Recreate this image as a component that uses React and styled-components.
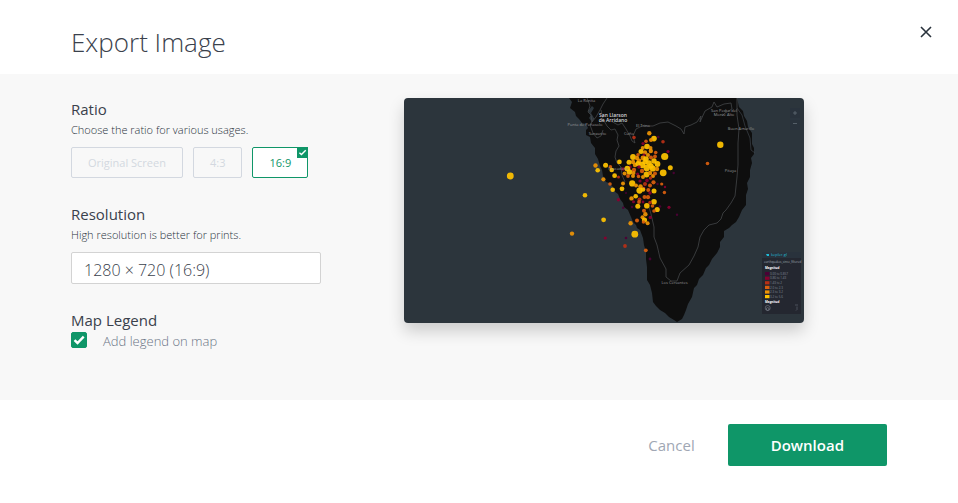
import React from "react";
import styled, { createGlobalStyle } from "styled-components";

const palette = {
  green: '#0f9668',
  title: '#3a414c',
  muted: '#6a7485',
  disabled: '#d3d8e0',
  panel: '#f8f8f8',
  water: '#2c353c',
  land: '#0e0e0e'
};

const GlobalStyle = createGlobalStyle`
  * {
    box-sizing: border-box;
  }

  body {
    margin: 0;
    background: #fff;
    color: ${palette.title};
    font-family: "Open Sans", "Noto Sans", sans-serif;
  }

  button, select, input {
    font-family: inherit;
    margin: 0;
  }
`;

const Dialog = styled.div`
  position: relative;
`;

const Header = styled.header`
  padding: 24px 71px 13px;
`;

const Title = styled.h1`
  margin: 0;
  font-size: 26px;
  font-weight: 300;
  line-height: 37px;
`;

const CloseButton = styled.button`
  position: absolute;
  top: 22px;
  right: 22px;
  width: 20px;
  height: 20px;
  padding: 0;
  border: 0;
  background: transparent;
  cursor: pointer;
`;

const Content = styled.main`
  display: flex;
  align-items: flex-start;
  gap: 83px;
  padding: 24px 71px 50px;
  background: ${palette.panel};
`;

const Settings = styled.div`
  display: flex;
  flex-direction: column;
  gap: 25px;
  flex: 0 0 250px;
`;

const SectionTitle = styled.h2`
  display: block;
  margin: 0 0 1px;
  font-size: 15px;
  font-weight: 400;
  line-height: 22px;
`;

const Hint = styled.p`
  margin: 0 0 9px;
  font-size: 11px;
  font-weight: 300;
  line-height: 17px;
  color: #29323c;
`;

const RatioOptions = styled.div`
  display: flex;
  gap: 10px;
`;

const RatioButton = styled.button`
  position: relative;
  height: 31px;
  padding: 0 16px;
  border: 1px solid ${({ $active }) => ($active ? palette.green : palette.disabled)};
  border-radius: 2px;
  background: ${({ $active }) => ($active ? '#fff' : 'transparent')};
  color: ${({ $active }) => ($active ? palette.green : palette.disabled)};
  font-size: 11px;
  font-weight: 500;
  white-space: nowrap;
  cursor: pointer;
`;

const Corner = styled.span`
  position: absolute;
  top: -1px;
  right: -1px;
  display: flex;
  width: 11px;
  height: 11px;
  background: ${palette.green};
`;

const ResolutionSelect = styled.select`
  display: block;
  width: 100%;
  height: 32px;
  padding: 4px 12px 0;
  appearance: none;
  border: 1px solid #d3d3d3;
  border-radius: 2px;
  background: #fff;
  color: ${palette.title};
  font-size: 16px;
  font-weight: 300;
`;

const CheckboxLabel = styled.label`
  display: flex;
  gap: 16px;
  color: ${palette.muted};
  font-size: 13px;
  font-weight: 300;
  line-height: 18px;
  cursor: pointer;
`;

const CheckboxBox = styled.span`
  display: grid;
  width: 16px;
  height: 16px;

  > * {
    grid-area: 1 / 1;
  }

  svg {
    pointer-events: none;
  }
`;

const Checkbox = styled.input`
  width: 16px;
  height: 16px;
  appearance: none;
  border: 1px solid ${palette.green};
  border-radius: 2px;

  &:checked {
    background: ${palette.green};
  }
`;

const Preview = styled.figure`
  flex: 0 1 400px;
  margin: 0;
  border-radius: 4px;
  overflow: hidden;
  box-shadow: 0 8px 16px rgba(0, 0, 0, 0.18);

  svg {
    display: block;
    width: 100%;
    height: auto;
  }
`;

const Footer = styled.footer`
  display: flex;
  justify-content: flex-end;
  padding: 24px 71px 37px;
`;

const FooterButton = styled.button`
  height: 42px;
  padding: 0 ${({ $primary }) => ($primary ? '43px' : '33px')};
  border: 0;
  border-radius: 2px;
  background: ${({ $primary }) => ($primary ? palette.green : 'transparent')};
  color: ${({ $primary }) => ($primary ? '#fff' : '#a0a7b4')};
  font-size: 15px;
  font-weight: ${({ $primary }) => ($primary ? 600 : 400)};
  cursor: pointer;
`;

const COLORS = ['#4c0035', '#880030', '#b72f15', '#d95f0e', '#ee9304', '#ffc300'];

// x, y, radius, color index
const QUAKES = [
  [106.3, 78, 3.4, 5], [181, 97.3, 2.3, 5], [168, 135.6, 2.2, 4], [199.6, 121.8, 2.4, 5],
  [201.3, 140, 1.6, 1], [222, 140, 1.3, 0], [221, 148, 1.9, 2], [230.8, 136.2, 3.4, 5],
  [241.8, 152.3, 1.9, 3], [246, 161, 1.4, 0], [226.6, 125.2, 2.2, 4], [233, 122.6, 2, 3],
  [316.3, 46.8, 3.2, 5], [303.5, 65.5, 1.8, 3], [273, 116.8, 1.2, 0], [265, 109.3, 1.6, 1],
  [269.7, 75, 1.2, 0], [230, 39.5, 1.8, 2], [259, 43.7, 1.8, 2], [264, 53.5, 1.6, 1],
  [254.3, 39, 1.3, 0], [191.5, 67.5, 2.2, 4], [193.7, 72.3, 2.3, 5], [201.6, 67.3, 2.5, 5],
  [206.4, 68.8, 1.8, 3], [207.7, 72, 2.3, 5], [215.4, 63.9, 2.4, 5], [210.6, 77.7, 2.4, 5],
  [214.5, 79, 1.5, 2], [199.4, 81.3, 2.1, 4], [206, 86, 1.8, 3], [208.7, 91.7, 2.3, 5],
  [218, 90.8, 2.4, 5], [219, 85.6, 2, 4], [214.4, 101.8, 1.7, 1], [219.3, 109.8, 1.3, 0],
  [222, 95, 1, 0], [219, 71, 1.7, 1], [228, 109, 1.2, 0],
  [257.7, 86, 1.6, 3], [260.4, 94.5, 1.7, 3], [261, 89, 1.2, 1], [266.3, 69.7, 2.5, 5],
  [260.7, 58.5, 3.6, 5], [259.2, 74.8, 3.4, 5], [245.3, 35.2, 2.2, 4], [250, 40.6, 2.8, 5],
  [247, 42, 2, 4], [242, 43.3, 1.8, 3], [239, 45.5, 1.6, 1], [238.7, 50, 2, 4],
  [243, 48.5, 2.8, 5], [246.5, 50, 2, 4], [237, 53.6, 2.5, 5], [241, 54.4, 2.2, 4],
  [246.8, 53, 2.2, 4], [251.7, 54.5, 1.8, 3], [234, 56.7, 1.8, 3], [229, 59, 2.9, 5],
  [233, 60, 2.2, 4], [225, 64.2, 2.5, 5], [235, 63, 2.4, 4], [240, 57, 1.4, 1],
  [251, 58.5, 1.9, 3], [244, 57, 2, 4], [239, 60, 2.4, 4], [229, 64, 2.2, 4],
  [242, 61, 2.8, 5], [247, 59.5, 2, 3], [245, 65, 2.8, 5], [250, 63, 2.7, 5],
  [253.5, 66, 2.9, 5], [238, 67, 3.2, 5], [231, 67, 2.2, 4], [226, 69, 1.7, 1],
  [234, 65.5, 2.6, 5], [247, 68, 2.7, 5], [241, 64, 2.6, 5],
  [223.3, 70.6, 2.9, 5], [225.5, 74, 2.8, 5], [220.6, 75.5, 2, 4], [230, 72, 2.2, 3],
  [235, 69, 1.8, 1], [242.7, 70, 3.2, 5], [248.7, 70.5, 3.1, 5], [253, 71, 2.2, 4],
  [238, 73, 2.2, 3], [233.6, 76, 1.6, 1], [229, 78, 2, 4], [234.5, 78.5, 1.8, 3],
  [229.5, 75, 2, 4], [224, 78, 1.9, 3], [249, 78, 2, 4],
  [242.5, 76.5, 2.9, 5], [246, 75, 2.2, 4], [251, 75.5, 2, 3], [239, 79, 2, 4],
  [246.5, 80, 1.7, 2], [243, 82.5, 1.8, 1], [236, 83, 1.6, 1], [249.5, 84.3, 2.1, 3],
  [228.2, 85.4, 3.1, 5], [232, 87.5, 2, 4], [241, 86, 2, 2], [246, 87.5, 2, 3],
  [236.5, 88.5, 2.3, 4], [253.5, 86, 1.2, 0], [240, 90, 1.5, 1], [235.5, 92.6, 3.1, 5],
  [239, 91.5, 2.3, 5], [244.3, 92, 2, 3], [250, 93, 2.5, 5], [246, 95, 1.7, 1],
  [231.7, 98.3, 2.3, 5], [227.5, 100.4, 2.2, 4], [235.5, 101.5, 2, 2], [229.5, 103.7, 1.5, 1],
  [240.5, 99, 2, 3], [244, 99.2, 2.1, 3], [235, 104, 1.9, 3], [239, 104, 1.4, 1],
  [250, 103.7, 2.8, 5], [246, 104.5, 1.8, 2], [233.8, 108.2, 2.5, 5], [242.8, 107.8, 2.8, 5],
  [248.5, 108, 1.8, 3], [256, 108.5, 1.3, 0], [253.2, 111.5, 2.6, 5], [250, 113, 1.8, 3],
  [240, 112.7, 2, 3], [241.4, 116.3, 2.2, 4], [246.3, 119.4, 1.6, 1], [238.5, 119.2, 2, 4],
  [240.5, 122, 2.6, 5], [243.6, 125.3, 2, 4], [239.5, 124, 1.8, 3]
];

const PLACES = [
  [182.5, 4, 'La Ronita'], [181, 28, 'Punta de Peñasolo'], [193.5, 37, 'Sanzarito'],
  [225, 37, 'Cuño'], [239, 28.5, 'El Trino'], [214, 72, 'Pescadero'],
  [320, 14, 'San Pedro del'], [320, 17.5, 'Monte Alto'], [337, 32, 'Buen Amarillo'],
  [326.5, 74, 'Pitaya'], [270.5, 186, 'Los Cervantes']
];

const LEGEND = ['0.00 to 0.857', '0.86 to 1.43', '1.43 to 2', '2.0 to 2.3', '2.3 to 3.2', '3.2 to 5.6'];

const LAND_PATH = `M165 0 L168 4 L166 10 L171 14 L172 18 L175 21 L178 25 L182 26 L184 30 L182 32 L182 37
  L186 39 L187 45 L191 50 L191 56 L194 61 L196 68 L198 72 L199 78 L202 84 L205 85 L209 89 L210 93
  L214 96 L216 101 L219 105 L220 109 L224 112 L227 119 L229 124 L232 127 L233 130 L236 132 L239 140
  L240 147 L242 154 L242 161 L243 169 L243 182 L246 187 L248 195 L249 204 L252 208 L256 212 L261 215
  L265 219 L270 222 L273 224 L278 221 L280 217 L282 212 L284 206 L288 199 L290 190 L293 187 L295 181
  L299 177 L302 170 L305 167 L308 161 L313 155 L316 149 L316 144 L320 139 L320 133 L325 130 L328 127
  L332 124 L335 119 L338 112 L342 107 L342 97 L344 91 L343 85 L346 79 L346 72 L348 65 L347 60 L350 56
  L350 50 L348 46 L348 35 L344 29 L343 23 L340 18 L339 13 L335 9 L333 0Z`;

const TickIcon = ({ size, width = 2 }) => (
  <svg width={size} height={size} viewBox="0 0 16 16" fill="none" stroke="#fff" strokeWidth={width} aria-hidden="true">
    <path d="M3.5 8.2 L6.5 11 L12.7 4.7" />
  </svg>
);

const MapPreview = ({ legend }) => (
  <svg viewBox="0 0 400 225" role="img" aria-label="Map preview" fontFamily="Open Sans, sans-serif">
    <rect width="400" height="225" fill={palette.water} />
    <path d={LAND_PATH} fill={palette.land} />
    <path d="M184 13 L187 17 L185 20 L188 24 L190 20 L187 15 L190 10 L188 8Z" fill={palette.water} />
    <g fill="none" stroke="#4a4d50" strokeWidth="0.7" strokeLinejoin="round">
      <path d="M183 0 L186 8 L184 14 L187 17 L188 24 L192 19 L196 12 L199 6 L203 0" />
      <path d="M190 20 L186 27 L189 35 L193 40 L197 38 L199 32" />
      <path d="M197 12 L199 21 L203 28 L207 32 L211 31 L214 37 L213 42 L215 48 L212 53 L211 59 L213 65 L217 69 L218 77 L221 84" />
      <path d="M207 23 L214 27 L218 25 L222 31 L226 38 L228 43 L231 45 L229 38 L232 31 L238 28 L249 28 L256 25 L264 24 L272 28 L277 31 L280 36 L281 29 L287 27 L293 24 L297 18 L296 24 L301 13 L308 9 L310 4 L313 9 L320 6 L327 5 L328 11 L321 15 L318 18" />
      <path d="M333 0 L333 17 L335 31 L334 45 L334 67 L333 79 L331 98 L327 105 L322 112 L319 115 L317 121 L313 125 L305 127 L300 132 L296 139 L294 149 L290 158 L285 167 L276 175 L273 183 L267 183 L262 179 L262 171 L256 160 L253 147 L250 139 L250 129 L247 116 L245 109" />
      <path d="M333 10 L338 17 L341 28 L346 40 L347 52 L351 55" stroke="#3c444a" />
    </g>
    {QUAKES.map(([x, y, r, c], i) => (
      <circle key={i} cx={x} cy={y} r={r} fill={COLORS[c]} opacity="0.93" />
    ))}
    <g fill="#96989a" fontSize="4" textAnchor="middle">
      {PLACES.map(([x, y, name]) => <text key={name} x={x} y={y}>{name}</text>)}
      <g fill="#d6d6dc" fontSize="5" fontWeight="600">
        <text x="209" y="19">San Llarson</text>
        <text x="209" y="24">de Arridano</text>
      </g>
    </g>
    <g>
      <rect x="386" y="10" width="10" height="22" rx="1" fill="#29323c" />
      <path d="M389 15h4M391 13v4M389 25.5h4" stroke="#68727d" strokeWidth="0.7" />
      <path d="M386 21h10" stroke="#374049" strokeWidth="0.5" />
    </g>
    {legend && (
      <g>
        <rect x="358" y="154" width="39" height="62" fill="#242730" />
        <rect x="358" y="154" width="39" height="6" fill="#29323c" />
        <path d="M362 156h3v2h-2z" fill="#1fbad6" />
        <text x="367" y="158" fontSize="4" fill="#1fbad6">kepler.gl</text>
        <text x="360" y="165" fontSize="3" fill="#a0a7b4">earthquakes_since_filtered</text>
        <text x="361" y="171" fontSize="3" fontWeight="700" fill="#fff">Magnitud</text>
        {LEGEND.map((label, i) => (
          <React.Fragment key={label}>
            <rect x="361" y={174 + i * 4.6} width="4.5" height="3.2" fill={COLORS[i]} />
            <text x="366" y={176.8 + i * 4.6} fontSize="3" fill="#818895">{label}</text>
          </React.Fragment>
        ))}
        <text x="361" y="205" fontSize="3" fontWeight="700" fill="#fff">Magnitud</text>
        <g fill="none" stroke="#8a919d" strokeWidth="0.5">
          <circle cx="363.7" cy="210" r="2.5" />
          <circle cx="363.7" cy="211" r="1.4" />
          <path d="M391 207h3M393 208.5v3l-1 1" strokeWidth="0.4" />
        </g>
      </g>
    )}
  </svg>
);

const RATIOS = ['Original Screen', '4:3', '16:9'];

const App = () => {
  const [ratio, setRatio] = React.useState('16:9')
  const [legend, setLegend] = React.useState(true)

  return (
    <Dialog role="dialog" aria-labelledby="export-title">
      <GlobalStyle />
      <Header>
        <Title id="export-title">Export Image</Title>
        <CloseButton type="button" aria-label="Close">
          <svg width="20" height="20" viewBox="0 0 20 20" stroke="#29323c" strokeWidth="1.6" aria-hidden="true">
            <path d="M5 5 L15 15 M15 5 L5 15" />
          </svg>
        </CloseButton>
      </Header>

      <Content>
        <Settings>
          <section>
            <SectionTitle>Ratio</SectionTitle>
            <Hint>Choose the ratio for various usages.</Hint>
            <RatioOptions>
              {RATIOS.map(r => (
                <RatioButton
                  key={r}
                  type="button"
                  $active={r === ratio}
                  aria-pressed={r === ratio}
                  onClick={() => setRatio(r)}
                >
                  {r}
                  {r === ratio && <Corner><TickIcon size={11} /></Corner>}
                </RatioButton>
              ))}
            </RatioOptions>
          </section>

          <section>
            <SectionTitle as="label" htmlFor="resolution">Resolution</SectionTitle>
            <Hint>High resolution is better for prints.</Hint>
            <ResolutionSelect id="resolution">
              <option>1280 × 720 (16:9)</option>
            </ResolutionSelect>
          </section>

          <section>
            <SectionTitle>Map Legend</SectionTitle>
            <CheckboxLabel>
              <CheckboxBox>
                <Checkbox type="checkbox" checked={legend} onChange={e => setLegend(e.target.checked)} />
                {legend && <TickIcon size={16} width={2.4} />}
              </CheckboxBox>
              Add legend on map
            </CheckboxLabel>
          </section>
        </Settings>

        <Preview>
          <MapPreview legend={legend} />
        </Preview>
      </Content>

      <Footer>
        <FooterButton type="button">Cancel</FooterButton>
        <FooterButton type="button" $primary>Download</FooterButton>
      </Footer>
    </Dialog>
  )
}

export default App;
